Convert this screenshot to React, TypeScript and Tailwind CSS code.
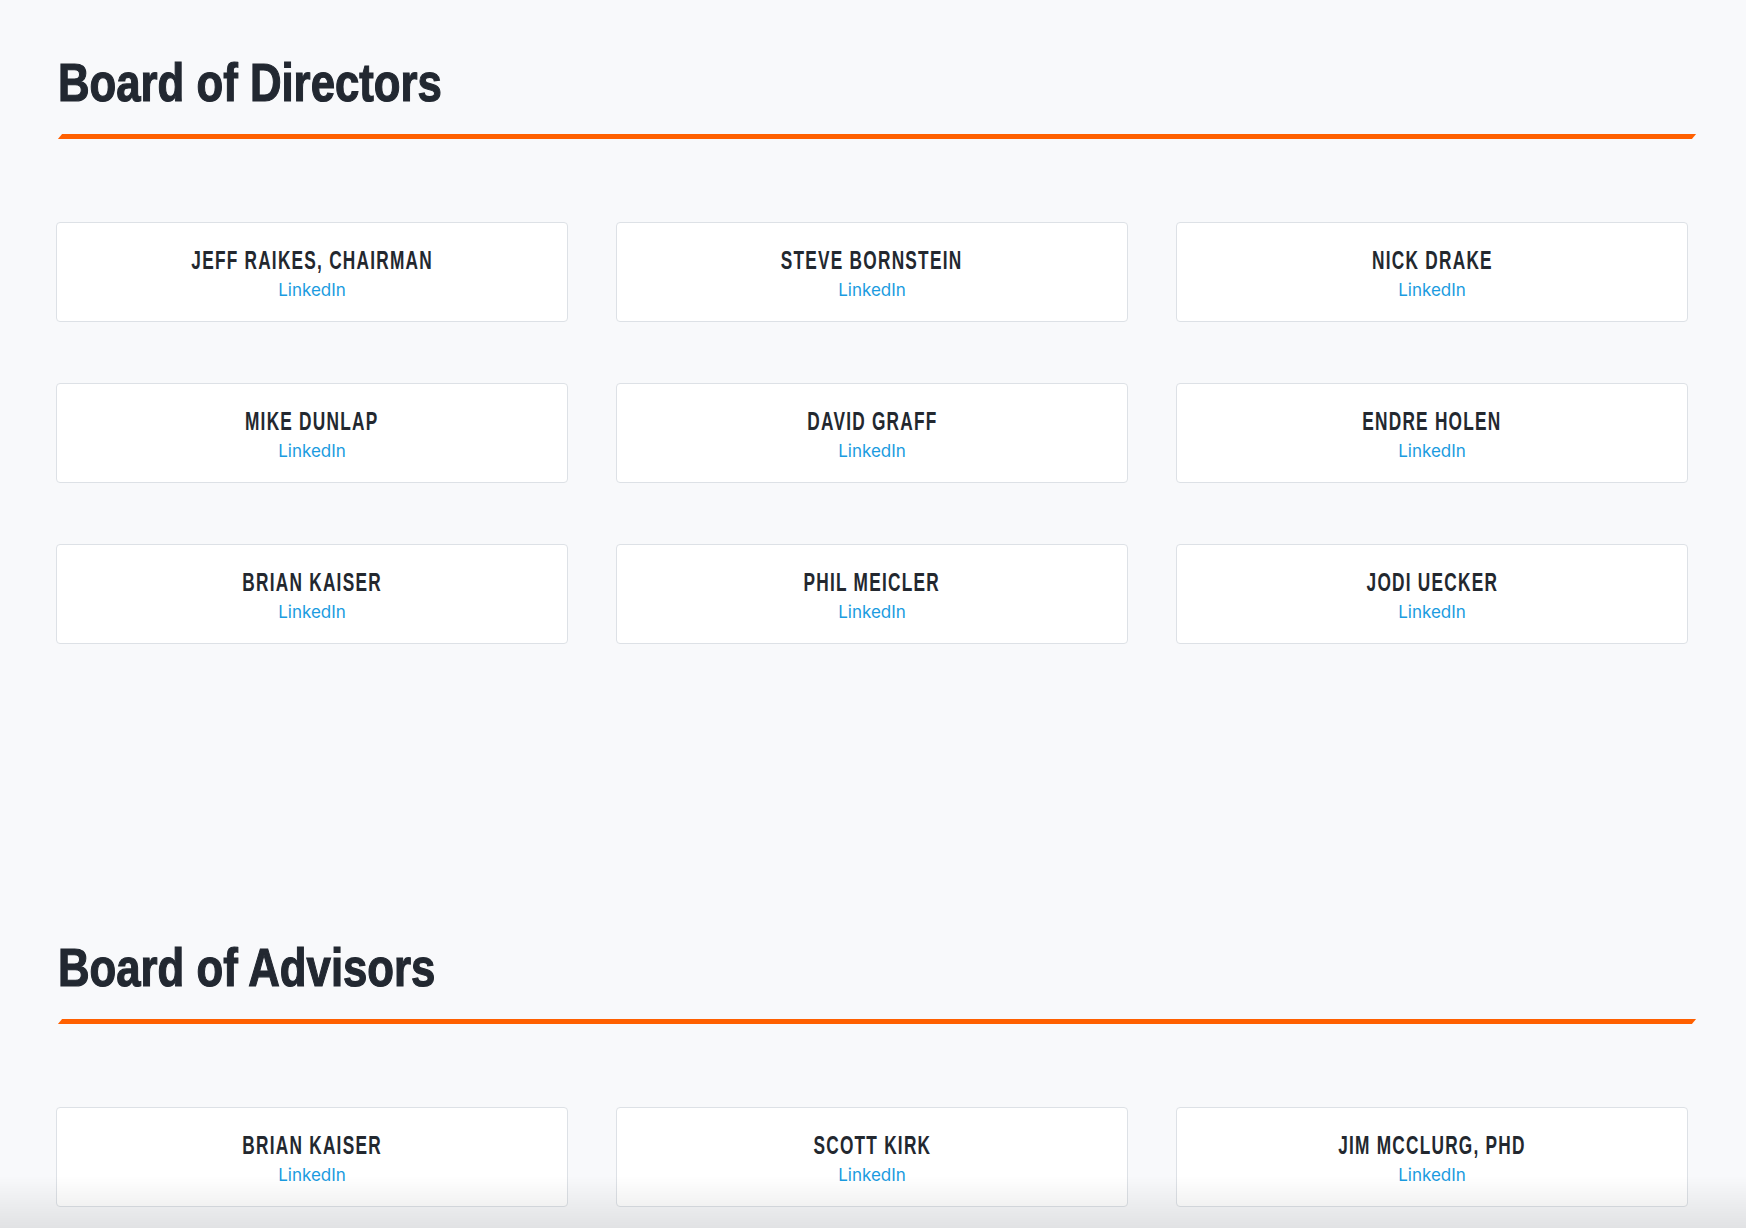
import React from "react";

const directors = [
  "JEFF RAIKES, CHAIRMAN",
  "STEVE BORNSTEIN",
  "NICK DRAKE",
  "MIKE DUNLAP",
  "DAVID GRAFF",
  "ENDRE HOLEN",
  "BRIAN KAISER",
  "PHIL MEICLER",
  "JODI UECKER",
];

const advisors = ["BRIAN KAISER", "SCOTT KIRK", "JIM MCCLURG, PHD", "JANE DOE", "JOHN SMITH", "ALEX LEE"];

function Card({ name }: { name: string }) {
  return (
    <div className="h-[100px] bg-white border border-[#dde1e6] rounded-[4px] flex flex-col items-center justify-center">
      <div className="pt-[2px] whitespace-nowrap">
        <span className="inline-block font-['Liberation_Sans',sans-serif] font-bold text-[25px] leading-[30px] tracking-[1.8px] text-[#23282f] scale-x-[0.69] origin-center">
          {name}
        </span>
      </div>
      <a href="#" className="mt-[3px] font-['Inter',sans-serif] text-[17px] leading-[24px] text-[#1a9be0]">
        LinkedIn
      </a>
    </div>
  );
}

function Section({ title, people, className }: { title: string; people: string[]; className?: string }) {
  return (
    <section className={className}>
      <h2 className="pl-[2px]">
        <span className="inline-block font-['Liberation_Sans',sans-serif] font-bold text-[53px] leading-[53px] text-[#222831] scale-x-[0.825] origin-left whitespace-nowrap [-webkit-text-stroke:1.2px_#222831]">
          {title}
        </span>
      </h2>
      <div className="mt-[25px] h-[5px] ml-[4px] mr-[-6px] bg-[#ff6000] skew-x-[-40deg]" />
      <div className="mt-[83px] grid grid-cols-3 gap-x-[48px] gap-y-[61px]">
        {people.map((p, i) => (
          <Card key={i} name={p} />
        ))}
      </div>
    </section>
  );
}

export default function App() {
  return (
    <div className="min-h-screen bg-[#f8f9fb] pl-[56px] pr-[58px] pt-[56px] pb-[120px]">
      <Section title="Board of Directors" people={directors} />
      <Section title="Board of Advisors" people={advisors} className="mt-[297px]" />
      <div className="fixed left-0 right-0 bottom-0 h-[52px] bg-linear-to-b from-transparent to-black/[0.09] pointer-events-none" />
    </div>
  );
}
